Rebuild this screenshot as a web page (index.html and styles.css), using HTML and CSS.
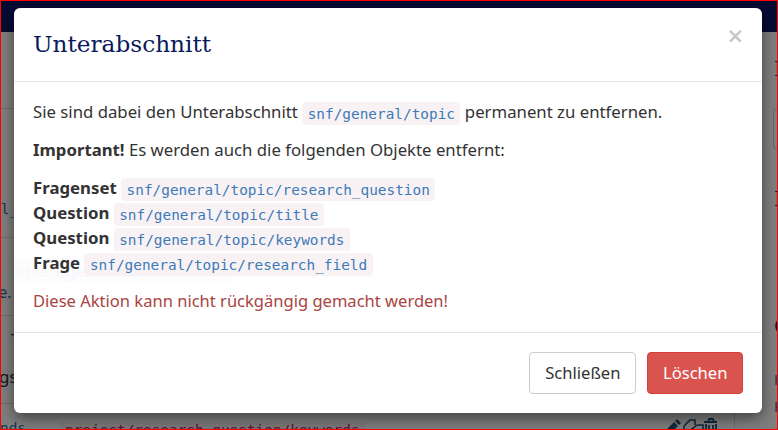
FILE: index.html
```html
<!DOCTYPE html>
<html lang="de">
<head>
<meta charset="utf-8">
<title>Unterabschnitt</title>
<link rel="stylesheet" href="styles.css">
</head>
<body>
<div class="frame">
  <div class="page">
    <div class="navbar"></div>
    <i class="rule r1"></i><i class="rule r2"></i><i class="rule r3"></i><i class="rule r4"></i>
    <span class="frag f-al">al_</span>
    <span class="frag f-re">re.</span>
    <span class="frag f-t">T</span>
    <span class="frag f-gs">gs</span>
    <span class="frag f-nds">nds</span>
    <span class="frag f-arrow">→</span>
    <code class="frag f-path">project/research_question/keywords</code>
    <span class="frag f-h h1">I</span>
    <span class="frag f-h h2">I</span>
    <span class="frag f-c">C</span>
    <span class="frag f-k k1">K</span>
    <span class="frag f-k k2">K</span>
    <i class="input-edge"></i>
    <i class="col-line"></i>
    <svg class="frag f-icons" width="54" height="16" viewBox="0 0 54 16" aria-hidden="true">
      <path d="M1 13 L10 4 L14 8 L5 16 L1 16 Z M11 3 L13 1 L17 5 L15 7 Z" fill="#24527a"/>
      <path d="M20 8 L26 2 H31 V7 M33 7 H39 V16 H28 V11 L33 7 M20 8 V16 H27" fill="none" stroke="#24527a" stroke-width="1.6"/>
      <path d="M40 4 H53 M44 4 L45 1 H49 L50 4 M42 6 V16 H52 V6 M45 7 V16 M49 7 V16" fill="none" stroke="#24527a" stroke-width="1.8"/>
    </svg>
  </div>
  <div class="backdrop"></div>
  <div class="modal">
    <div class="ghost">Rechteckiges Ausschneiden</div>
    <div class="modal-header">
      <h2 class="modal-title">Unterabschnitt</h2>
      <span class="close">×</span>
    </div>
    <div class="modal-body">
      <p>Sie sind dabei den Unterabschnitt <code>snf/general/topic</code> permanent zu entfernen.</p>
      <p><strong>Important!</strong> Es werden auch die folgenden Objekte entfernt:</p>
      <ul class="list">
        <li><strong>Fragenset</strong> <code>snf/general/topic/research_question</code></li>
        <li><strong>Question</strong> <code>snf/general/topic/title</code></li>
        <li><strong>Question</strong> <code>snf/general/topic/keywords</code></li>
        <li><strong>Frage</strong> <code>snf/general/topic/research_field</code></li>
      </ul>
      <p class="danger">Diese Aktion kann nicht rückgängig gemacht werden!</p>
    </div>
    <div class="modal-footer">
      <button class="btn btn-default">Schließen</button>
      <button class="btn btn-danger">Löschen</button>
    </div>
  </div>
</div>
</body>
</html>
```
FILE: styles.css
```css
* { box-sizing: border-box; }
html, body { margin: 0; padding: 0; }
body { width: 778px; height: 430px; overflow: hidden; font-family: "Noto Sans", sans-serif; }
.frame { position: relative; width: 778px; height: 430px; border: 1px solid #f00; overflow: hidden; background: #fff; }
.page { position: absolute; inset: 0; background: #fff; color: #333; }
.navbar { height: 31px; background: #0b1466; }
.backdrop { position: absolute; inset: 0; background: rgba(0,0,0,.5); }
.rule { position: absolute; left: 0; width: 14px; height: 1px; background: #ddd; }
.r1 { top: 107px; }
.r2 { top: 236px; }
.r3 { top: 314px; }
.r4 { top: 402px; }
.frag { position: absolute; white-space: nowrap; }
.f-al { left: -9px; top: 200px; font-family: "DejaVu Sans Mono", monospace; font-size: 14.4px; color: #2f6ea8; }
.f-re { left: -9px; top: 280px; font-size: 16px; color: #2f6ea8; }
.f-t { left: 10px; top: 328px; font-size: 14px; color: #333; }
.f-gs { left: -2px; top: 364px; font-size: 17px; color: #333; }
.f-nds { left: -1px; top: 419px; font-family: "DejaVu Sans Mono", monospace; font-size: 14.4px; color: #2f6ea8; }
.f-arrow { left: 46px; top: 419px; font-size: 14px; color: #333; }
.f-path { left: 58px; top: 421px; color: #c7254e; background: #f9f2f4; padding: 0 6px; }
.f-h { font-family: "DejaVu Serif", serif; font-size: 20px; line-height: 20px; color: #0b1466; left: 773px; }
.h1 { top: 58px; }
.h2 { top: 188px; }
.f-c { left: 773px; top: 314px; font-family: "DejaVu Serif", serif; font-size: 22px; line-height: 24px; color: #0b1466; }
.f-k { left: 773px; font-size: 14px; line-height: 18px; color: #2f6ea8; }
.k1 { top: 370px; }
.k2 { top: 397px; }
.input-edge { position: absolute; left: 772px; top: 107px; width: 10px; height: 42px; border: 1px solid #ccc; border-radius: 4px; }
.col-line { position: absolute; left: 733px; top: 405px; width: 1px; height: 30px; background: #ddd; }
.f-icons { left: 663px; top: 417px; }
.modal { position: absolute; left: 13px; top: 7px; width: 748px; height: 405px; background: #fff; border-radius: 6px; box-shadow: 0 5px 15px rgba(0,0,0,.5); display: flex; flex-direction: column; color: #333; }
.modal-header { height: 74px; border-bottom: 1px solid #e5e5e5; padding: 0 19px; position: relative; }
.modal-title { margin: 0; padding-top: 19px; font-family: "DejaVu Serif", serif; font-weight: 400; font-size: 23.2px; line-height: 33px; color: #0a1a5c; }
.close { position: absolute; right: 18px; top: 16px; font-family: "DejaVu Sans", sans-serif; font-size: 21px; line-height: 24px; font-weight: 700; color: #c9c9c9; }
.modal-body { flex: 1; position: relative; padding: 19px 19px 0; font-size: 16.75px; line-height: 22.4px; }
.modal-body p { margin: 0 0 15px; }
.list { list-style: none; margin: -1px 0 14px; padding: 0; }
.list li { height: 25px; line-height: 24px; }
.list strong { font-size: 16.8px; vertical-align: 1px; }
code { font-family: "DejaVu Sans Mono", monospace; font-size: 14.4px; color: #3d7ab8; background: #f9f2f4; border-radius: 4px; padding: 3.5px 5.5px; }
.modal-body .danger { color: #a94442; font-size: 16.55px; }
.modal-footer { height: 81px; border-top: 1px solid #e5e5e5; padding: 19px; display: flex; justify-content: flex-end; gap: 11px; align-items: flex-start; }
.btn { font-family: "Noto Sans", sans-serif; font-size: 16.6px; line-height: 22px; height: 42px; padding: 9px 15px; border-radius: 4px; border: 1px solid #ccc; background: #fff; color: #333; }
.btn-danger { background: #d9534f; border-color: #d43f3a; color: #fff; padding: 9px 14.5px; }
.ghost { position: absolute; left: -12px; top: 250px; width: 231px; height: 25px; font-size: 14.5px; line-height: 27px; color: #f6f7f9; background: #fdfdfe; white-space: nowrap; overflow: hidden; clip-path: inset(0 0 0 12px); }
```
